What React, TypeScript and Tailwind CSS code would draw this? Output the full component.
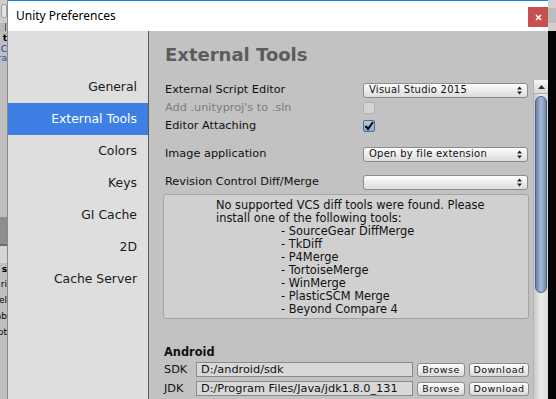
import React from "react";

const UF = "font-['DejaVu_Sans',Verdana,sans-serif]";

function Arrows() {
  return (
    <svg width="5" height="9" viewBox="0 0 5 9" className="shrink-0">
      <polygon points="0,3.5 2.5,0.5 5,3.5" fill="#222" />
      <polygon points="0,5.5 2.5,8.5 5,5.5" fill="#222" />
    </svg>
  );
}

function Dropdown({ text }: { text: string }) {
  return (
    <div className="w-[165px] h-[15px] rounded-[3px] border border-[#8c8c8c] bg-linear-to-b from-[#fefefe] to-[#dcdcdc] flex items-center justify-between pl-[5px] pr-[5px] text-[10px] leading-none tracking-[0.25px] text-[#111]">
      <span>{text}</span>
      <Arrows />
    </div>
  );
}

function Btn({ text, w }: { text: string; w: string }) {
  return (
    <div
      className={`${w} h-[14px] rounded-[3px] border border-[#8c8c8c] bg-linear-to-b from-[#fefefe] to-[#dadada] flex items-center justify-center text-[9.5px] leading-none tracking-[0.5px] text-[#111]`}
    >
      {text}
    </div>
  );
}

function Row({ label, gray, children }: { label: string; gray?: boolean; children: React.ReactNode }) {
  return (
    <div className="h-[18px] shrink-0 flex items-center">
      <div className={`w-[198px] ${gray ? "text-[#7d7d7d]" : "text-[#111]"}`}>{label}</div>
      {children}
    </div>
  );
}

export default function App() {
  const items = ["General", "External Tools", "Colors", "Keys", "GI Cache", "2D", "Cache Server"];
  const tools = [
    "- SourceGear DiffMerge",
    "- TkDiff",
    "- P4Merge",
    "- TortoiseMerge",
    "- WinMerge",
    "- PlasticSCM Merge",
    "- Beyond Compare 4",
  ];
  return (
    <div className={`flex w-[556px] h-[399px] overflow-hidden bg-[#c2c2c2] ${UF}`}>
      {/* left editor strip behind the window */}
      <div className="w-[8px] shrink-0 flex flex-col bg-[#bfbfbf] border-r border-[#8a8a8a] overflow-hidden text-[9px] leading-[9px]">
        <div className="h-[23px] shrink-0 bg-[#cdcdcd] pt-[4px] pl-[1px]">
          <div className="h-[14px] rounded-[2px] bg-[#e4e4e4] border border-[#a0a0a0]" />
        </div>
        <div className="h-[9px] shrink-0 bg-[#b8b8b8] flex justify-end pr-[1px]">
          <div className="w-px h-[8px] bg-[#555]" />
        </div>
        <div className="h-[13px] shrink-0 flex justify-end items-center font-bold text-black whitespace-nowrap">t</div>
        <div className="h-[9px] shrink-0 flex justify-end items-center text-[#2448a8] whitespace-nowrap">C</div>
        <div className="h-[9px] shrink-0 flex justify-end items-center text-[#2448a8] whitespace-nowrap">ra</div>
        <div className="h-[154px] shrink-0" />
        <div className="h-[27px] shrink-0 bg-[#8e8e8e]" />
        <div className="h-[2px] shrink-0 bg-[#6a6a6a]" />
        <div className="h-[17px] shrink-0 bg-[#d6d6d6]" />
        <div className="h-[13px] shrink-0 flex justify-end items-center font-bold text-black whitespace-nowrap">s</div>
        <div className="h-[16px] shrink-0 flex justify-end items-center text-black whitespace-nowrap">ri</div>
        <div className="h-[16px] shrink-0 flex justify-end items-center text-black whitespace-nowrap">el</div>
        <div className="h-[16px] shrink-0 flex justify-end items-center text-black whitespace-nowrap">ab</div>
        <div className="h-[16px] shrink-0 flex justify-end items-center text-black whitespace-nowrap">pt</div>
      </div>

      {/* window */}
      <div className="w-[540px] shrink-0 flex flex-col">
        <div className="h-[1px] shrink-0 bg-[#1883d7]" />
        <div className="h-[30px] shrink-0 bg-white flex items-start justify-between pl-[8px]">
          <span className="mt-[7px] text-[12px] leading-[16px] text-black font-['Noto_Sans',sans-serif]">Unity Preferences</span>
          <div className="mt-[6px] w-[20px] h-[20px] bg-[#c75050] flex items-center justify-center">
            <svg width="7" height="7" viewBox="0 0 7 7">
              <path d="M1 1 L6 6 M6 1 L1 6" stroke="white" strokeWidth="1.6" />
            </svg>
          </div>
        </div>
        <div className="flex flex-1 min-h-0">
          {/* sidebar */}
          <div className="w-[141px] shrink-0 bg-[#dedede] border-r border-[#5a5a5a] pt-[40px] flex flex-col text-[12.4px]">
            {items.map((it) => (
              <div
                key={it}
                className={`h-[32px] shrink-0 flex items-center justify-end pr-[11px] ${
                  it === "External Tools" ? "bg-[#3e7fe4] text-white" : "text-[#1a1a1a]"
                }`}
              >
                {it}
              </div>
            ))}
          </div>

          {/* content */}
          <div className="flex-1 flex min-w-0 overflow-hidden">
            <div className="flex-1 flex flex-col pt-[13px] text-[11.3px] leading-none min-w-0">
              <div className="pl-[16px] h-[22px] shrink-0 flex items-center text-[18px] font-bold text-[#5c5c5c]">External Tools</div>
              <div className="pl-[16px] mt-[15px] shrink-0 flex flex-col">
                <Row label="External Script Editor">
                  <Dropdown text="Visual Studio 2015" />
                </Row>
                <Row label="Add .unityproj's to .sln" gray>
                  <div className="w-[12px] h-[12px] rounded-[2px] border border-[#b0b0b0] bg-[#d4d4d4]" />
                </Row>
                <Row label="Editor Attaching">
                  <div className="w-[12px] h-[12px] rounded-[2px] border border-[#4e6a92] bg-linear-to-b from-[#b9cbe6] to-[#8ea9d1] flex items-center justify-center">
                    <svg width="10" height="10" viewBox="0 0 10 10">
                      <path d="M1.5 5 L4 8 L9 1" stroke="#000" strokeWidth="2" fill="none" />
                    </svg>
                  </div>
                </Row>
                <div className="mt-[10px]">
                  <Row label="Image application">
                    <Dropdown text="Open by file extension" />
                  </Row>
                </div>
                <div className="mt-[10px]">
                  <Row label="Revision Control Diff/Merge">
                    <Dropdown text="" />
                  </Row>
                </div>
              </div>
              <div className="ml-[14px] mr-[4px] mt-[3px] h-[125px] shrink-0 rounded-[3px] border border-[#a4a4a4] bg-[#d0d0d0] pt-[4px] pl-[52px] text-[11.4px] leading-[13px] text-[#111]">
                <div>No supported VCS diff tools were found. Please</div>
                <div>install one of the following tools:</div>
                {tools.map((t) => (
                  <div key={t} className="pl-[65px]">
                    {t}
                  </div>
                ))}
              </div>
              <div className="pl-[15px] mt-[27px] h-[14px] shrink-0 flex items-center font-bold text-[11.4px] text-[#111]">Android</div>
              <div className="pl-[15px] pr-[4px] shrink-0 flex flex-col">
                {[
                  ["SDK", "D:/android/sdk"],
                  ["JDK", "D:/Program Files/Java/jdk1.8.0_131"],
                  ["NDK", ""],
                ].map(([l, v]) => (
                  <div key={l} className="h-[19px] shrink-0 flex items-center">
                    <div className="w-[32px] text-[#111]">{l}</div>
                    <div className="w-[217px] h-[15px] border border-[#8a8a8a] bg-[#d8d8d8] flex items-center pl-[4px] text-[11.3px] text-[#111] whitespace-nowrap overflow-hidden">
                      {v}
                    </div>
                    <div className="ml-[4px]">
                      <Btn text="Browse" w="w-[48px]" />
                    </div>
                    <div className="ml-[4px]">
                      <Btn text="Download" w="w-[60px]" />
                    </div>
                  </div>
                ))}
              </div>
            </div>

            {/* scrollbar */}
            <div className="w-[15px] shrink-0 flex flex-col pt-[49px]">
              <div className="flex-1 flex flex-col bg-linear-to-r from-[#c9c9c9] via-[#ececec] to-[#d9d9d9] border-l border-[#b4b4b4]">
                <div className="h-[14px] shrink-0 flex items-center justify-center bg-linear-to-b from-[#f4f4f4] to-[#d8d8d8] border-b border-[#b0b0b0]">
                  <svg width="7" height="4" viewBox="0 0 7 4">
                    <polygon points="0,4 3.5,0 7,4" fill="#333" />
                  </svg>
                </div>
                <div className="mt-[2px] mx-px h-[197px] shrink-0 rounded-full border border-[#4d6386] bg-linear-to-r from-[#6a82a6] via-[#a7badb] to-[#7189ad]" />
              </div>
            </div>
          </div>
        </div>
      </div>

      {/* right strip */}
      <div className="flex-1 flex flex-col">
        <div className="h-[8px] shrink-0 bg-[#d2d2d2]" />
        <div className="h-[15px] shrink-0 bg-[#bdbdbd]" />
        <div className="h-[8px] shrink-0 bg-[#cfcfcf]" />
        <div className="flex-1 bg-[#050505]" />
      </div>
    </div>
  );
}
